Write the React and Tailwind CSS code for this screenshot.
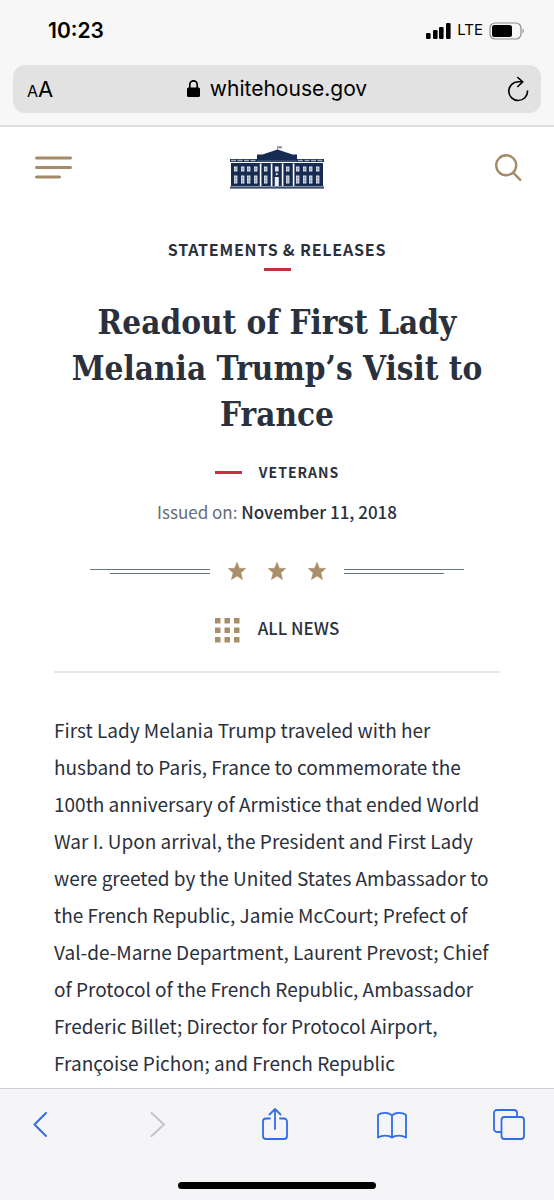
import { Fragment } from 'react';

const WINDOW_COLUMNS = [4, 11, 17, 24, 34, 56, 66, 73, 79, 86];
const COLUMNS = [30, 41, 52, 63];
const SIGNAL_BARS = [[0, 11], [7, 8], [13, 5], [20, 1]];
const GRID_OFFSETS = [0, 9.5, 19];

const BLUE = '#2f6ee6';

function StatusBar() {
  return (
    <div className="flex h-[65px] items-center justify-between pb-1 pl-12 pr-[29px]">
      <time className="text-[21px] font-semibold">10:23</time>
      <div className="flex items-center gap-1.5">
        <svg width="25" height="18" viewBox="0 0 25 18" aria-hidden="true">
          {SIGNAL_BARS.map(([x, y]) => (
            <rect key={x} x={x} y={y} width="4.6" height={17 - y} rx="1.2" />
          ))}
        </svg>
        <span className="text-[15px]">LTE</span>
        <svg width="36" height="18" viewBox="0 0 36 18" aria-hidden="true">
          <rect x="1" y="1" width="31" height="16" rx="5" fill="none" stroke="#8c8c8c" strokeWidth="1.2" />
          <rect x="3" y="3" width="20" height="12" rx="2.5" />
          <path d="M33.5 6.500q3 2.500 0 5z" fill="#9a9a9a" />
        </svg>
      </div>
    </div>
  );
}

function AddressBar() {
  return (
    <div className="px-[13px] pb-3">
      <div className="flex h-12 items-center justify-between rounded-xl bg-[#e2e2e3] px-3">
        <button type="button" aria-label="Page settings" className="flex w-8 items-baseline pl-0.5">
          <span className="text-base">A</span>
          <span className="text-[22px]">A</span>
        </button>
        <div className="flex items-center gap-2.5">
          <svg width="13" height="19" viewBox="0 0 13 19" aria-hidden="true">
            <rect x="0" y="7.500" width="13" height="9.500" rx="1.5" />
            <path d="M2.800 9V4.500a3.700 3.700 0 0 1 7.400 0V9" fill="none" stroke="#000" strokeWidth="1.7" />
          </svg>
          <span className="text-[21px]">whitehouse.gov</span>
        </div>
        <button type="button" aria-label="Reload" className="flex w-8 justify-end">
          <svg
            width="22"
            height="26"
            viewBox="0 0 22 26"
            fill="none"
            stroke="#000"
            strokeWidth="1.6"
            strokeLinecap="round"
            strokeLinejoin="round"
          >
            <path d="M15.500 5.700H11a9.400 9.400 0 1 0 9.600 9.400" />
            <path d="M10.800 1.500l4.900 4.300-4.900 4.700" />
          </svg>
        </button>
      </div>
    </div>
  );
}

function WhiteHouseLogo() {
  return (
    <svg width="94" height="44" viewBox="0 0 94 44" fill="#162c52" aria-hidden="true">
      {/* flag */}
      <path d="M47.500 0v4" stroke="#7c8799" strokeWidth="0.7" />
      <path d="M48 0.300h4v2h-4z" fill="#8a8794" />
      {/* pediment and roof */}
      <path d="M27 13.500V8.500h5.500L47.500 3.500l15 5H67v5z" />
      <path d="M0 13h94v3H0z" />
      <path d="M1 14.500h25M68 14.500h25" stroke="#a3adbd" strokeWidth="1.3" strokeDasharray="5 1.500" />
      <path d="M27 15h40" stroke="#8793a8" strokeWidth="0.6" />
      <path d="M1 17h92v23H1z" />
      {COLUMNS.map((x) => (
        <path key={x} d={`M${x - 0.2} 17.500h1.600v22.500h-1.600z`} fill="#fff" />
      ))}
      {WINDOW_COLUMNS.map((x) => (
        <Fragment key={x}>
          <rect x={x} y="20.500" width="3.400" height="5" fill="#dfe4ec" />
          <rect x={x} y="29.500" width="3.400" height="8" fill="#dfe4ec" />
          <path
            d={`M${x + 1.7} 20.500v5M${x + 1.7} 29.500v8M${x} 23h3.400M${x} 32h3.400M${x} 35h3.400`}
            stroke="#6d7c96"
            strokeWidth="0.5"
          />
        </Fragment>
      ))}
      <rect x="45" y="20.500" width="3.600" height="5" fill="#dfe4ec" />
      <path d="M46.800 26.500l1.500 1.700-1.500 1.300-1.500-1.300z" fill="#c9d0dc" />
      <path d="M44.800 31h4v9h-4z" fill="#eef1f5" />
      <path d="M0 41h94v1.800H0z" fill="#5b6881" />
      <path d="M0 40.500h94v1H0z" />
    </svg>
  );
}

function SiteNav() {
  return (
    <nav className="grid h-[82px] grid-cols-3 items-center px-8">
      <button type="button" aria-label="Menu" className="justify-self-start">
        <svg width="41" height="24" viewBox="0 0 41 24" stroke="#a48a68" strokeWidth="3" strokeLinecap="round">
          <path d="M4.500 2h34M4.500 11.500h34M4.500 21h23" />
        </svg>
      </button>
      <a href="#home" aria-label="The White House" className="justify-self-center">
        <WhiteHouseLogo />
      </a>
      <button type="button" aria-label="Search" className="justify-self-end">
        <svg width="27" height="28" viewBox="0 0 27 28" fill="none" stroke="#a48a68" strokeWidth="2.400" strokeLinecap="round">
          <circle cx="11.200" cy="11.300" r="10" />
          <path d="M18.500 19l6.800 6.800" />
        </svg>
      </button>
    </nav>
  );
}

function Star() {
  return (
    <svg width="18" height="18" viewBox="0 0 18 18" fill="#a98f68" stroke="#a98f68" strokeWidth="0.6" aria-hidden="true">
      <path d="M9 .3l2.300 5.900 6.400.4-4.900 4.100 1.700 6.800L9 13.900l-5.500 3.600 1.700-6.800L.3 6.600l6.400-.4z" />
    </svg>
  );
}

function StarDivider() {
  return (
    <div className="mt-[38px] flex items-center px-9">
      <div className="flex flex-1 flex-col items-end gap-[3px]">
        <div className="h-px w-full bg-[#64748a]" />
        <div className="h-px w-5/6 bg-[#64748a]" />
      </div>
      <div className="flex gap-[22px] px-[18px]">
        <Star />
        <Star />
        <Star />
      </div>
      <div className="flex flex-1 flex-col gap-[3px]">
        <div className="h-px w-full bg-[#64748a]" />
        <div className="h-px w-5/6 bg-[#64748a]" />
      </div>
    </div>
  );
}

function Article() {
  return (
    <article className='px-[54px] font-["Noto_Sans_CJK_SC",sans-serif] text-[#2a303c]'>
      <div className="text-center">
        <p className="mt-7 text-base font-bold tracking-wider">STATEMENTS &amp; RELEASES</p>
        <div className="mx-auto mt-[7px] h-[3px] w-[27px] bg-[#c9303b]" />
        <h1 className='mt-[29px] font-["DejaVu_Serif_Condensed","DejaVu_Serif",serif] text-[33px] font-bold leading-[46px]'>
          Readout of First Lady Melania Trump’s Visit to France
        </h1>
        <div className="mt-6 flex items-center justify-center gap-[17px]">
          <div className="h-[3px] w-[27px] bg-[#c9303b]" />
          <a href="#veterans" className="text-sm font-bold tracking-[1px]">VETERANS</a>
        </div>
        <p className="mt-[18px] text-[17px] leading-6">
          <span className="text-[#666b77]">Issued on:</span>{' '}
          <time dateTime="2018-11-11" className="font-medium">November 11, 2018</time>
        </p>
        <StarDivider />
        <a href="#news" className="mt-[38px] flex items-start justify-center gap-[18px]">
          <svg width="25" height="25" viewBox="0 0 25 25" fill="#a98f68" aria-hidden="true">
            {GRID_OFFSETS.map((y) =>
              GRID_OFFSETS.map((x) => <rect key={`${x}-${y}`} x={x} y={y} width="5.5" height="5.5" />)
            )}
          </svg>
          <span className="text-[17px] font-medium leading-5">ALL NEWS</span>
        </a>
      </div>
      <hr className="mt-7 border-t-2 border-[#e5e6eb]" />
      <p className="mt-[38px] text-[19px] leading-[37px]">
        First Lady Melania Trump traveled with her husband to Paris, France to commemorate the 100th anniversary of
        Armistice that ended World War I. Upon arrival, the President and First Lady were greeted by the United States
        Ambassador to the French Republic, Jamie McCourt; Prefect of Val-de-Marne Department, Laurent Prevost; Chief of
        Protocol of the French Republic, Ambassador Frederic Billet; Director for Protocol Airport, Françoise Pichon;
        and French Republic
      </p>
    </article>
  );
}

function ToolbarButton({ label, disabled, children }) {
  return (
    <button type="button" aria-label={label} disabled={disabled}>
      <svg
        width="32"
        height="32"
        viewBox="0 0 32 32"
        fill="none"
        stroke={disabled ? '#c4c4c6' : BLUE}
        strokeWidth="1.8"
        strokeLinecap="round"
        strokeLinejoin="round"
      >
        {children}
      </svg>
    </button>
  );
}

function BrowserToolbar() {
  return (
    <footer className="sticky bottom-0 border-t border-[#cfcfd1] bg-[#f5f5f7] pb-[11px] pt-[19px]">
      <div className="flex justify-between pl-6 pr-[29px]">
        <ToolbarButton label="Back">
          <path d="M22 5L10.500 16.500 22 28" strokeWidth="2" />
        </ToolbarButton>
        <ToolbarButton label="Forward" disabled>
          <path d="M10.500 5L23 16.500 10.500 28" strokeWidth="2" />
        </ToolbarButton>
        <ToolbarButton label="Share">
          <path d="M11 10.500H7A3 3 0 0 0 4 13.500V28a3 3 0 0 0 3 3h18a3 3 0 0 0 3-3V13.500a3 3 0 0 0-3-3h-4" />
          <path d="M16 21V1.500M10.500 6.500L16 1l5.500 5.500" />
        </ToolbarButton>
        <ToolbarButton label="Bookmarks">
          <path d="M16 7.500C13 4.200 5.500 4 2 7v22.500c4-2.500 11-2.500 14 0 3-2.500 10-2.500 14 0V7c-3.500-3-11-2.800-14 .500zV29" />
        </ToolbarButton>
        <ToolbarButton label="Tabs">
          <rect x="8.500" y="9" width="22.500" height="22" rx="3" />
          <path d="M8 24H4a3 3 0 0 1-3-3V5a3 3 0 0 1 3-3h17a3 3 0 0 1 3 3v3.500" />
        </ToolbarButton>
      </div>
      <div className="mx-auto mt-[42px] h-[7px] w-[198px] rounded-full bg-black" />
    </footer>
  );
}

export default function App() {
  return (
    <div className='flex min-h-screen flex-col bg-white font-["Inter",sans-serif] text-black'>
      <header className="border-b-2 border-[#dddddd] bg-[#f7f7f7]">
        <StatusBar />
        <AddressBar />
      </header>
      <main className="flex-1">
        <SiteNav />
        <Article />
      </main>
      <BrowserToolbar />
    </div>
  );
}
